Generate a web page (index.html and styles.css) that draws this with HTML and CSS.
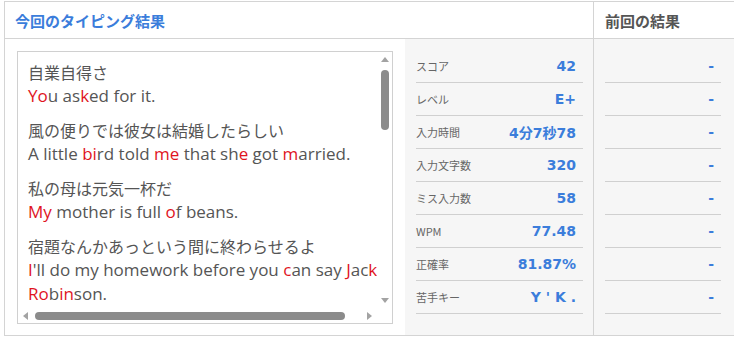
FILE: index.html
```html
<!DOCTYPE html>
<html lang="ja">
<head>
  <meta charset="UTF-8">
  <meta name="viewport" content="width=device-width, initial-scale=1.0">
  <link rel="stylesheet" href="styles.css">
</head>
<body>
  <div class="result">
    <div class="result-head">
      <div class="head-now">今回のタイピング結果</div>
      <div class="head-prev">前回の結果</div>
    </div>
    <div class="result-body">
      <div class="now">
        <div class="typed">
          <div class="typed-box">
            <div class="typed-view">
              <div class="typed-text">
                <div class="pair">
                  <p class="ja">自業自得さ</p>
                  <p class="en"><span class="miss">Yo</span>u as<span class="miss">k</span>ed for it.</p>
                </div>
                <div class="pair">
                  <p class="ja">風の便りでは彼女は結婚したらしい</p>
                  <p class="en">A little <span class="miss">bi</span>rd told <span class="miss">me</span> that sh<span class="miss">e</span> got <span class="miss">m</span>arried.</p>
                </div>
                <div class="pair">
                  <p class="ja">私の母は元気一杯だ</p>
                  <p class="en"><span class="miss">My</span> mother is full <span class="miss">o</span>f beans.</p>
                </div>
                <div class="pair">
                  <p class="ja">宿題なんかあっという間に終わらせるよ</p>
                  <p class="en"><span class="miss">I</span>'ll do my homework before you <span class="miss">c</span>an say <span class="miss">J</span>ac<span class="miss">k</span> <span class="miss">Ro</span>b<span class="miss">in</span>son.</p>
                </div>
              </div>
            </div>
            <div class="vbar">
              <div class="arrow"><span class="tri up"></span></div>
              <div class="vtrack"><div class="thumb vthumb"></div></div>
              <div class="arrow"><span class="tri down"></span></div>
            </div>
            <div class="hbar">
              <div class="arrow"><span class="tri left"></span></div>
              <div class="htrack"><div class="thumb hthumb"></div></div>
              <div class="arrow"><span class="tri right"></span></div>
            </div>
            <div class="corner"></div>
          </div>
        </div>
        <ul class="stats">
          <li><span class="label">スコア</span><span class="value">42</span></li>
          <li><span class="label">レベル</span><span class="value">E+</span></li>
          <li><span class="label">入力時間</span><span class="value">4分7秒78</span></li>
          <li><span class="label">入力文字数</span><span class="value">320</span></li>
          <li><span class="label">ミス入力数</span><span class="value">58</span></li>
          <li><span class="label">WPM</span><span class="value">77.48</span></li>
          <li><span class="label">正確率</span><span class="value">81.87%</span></li>
          <li><span class="label">苦手キー</span><span class="value keys">Y ' K .</span></li>
        </ul>
      </div>
      <ul class="stats prev">
        <li><span class="value">-</span></li>
        <li><span class="value">-</span></li>
        <li><span class="value">-</span></li>
        <li><span class="value">-</span></li>
        <li><span class="value">-</span></li>
        <li><span class="value">-</span></li>
        <li><span class="value">-</span></li>
        <li><span class="value">-</span></li>
      </ul>
    </div>
  </div>
</body>
</html>
```

FILE: styles.css
```css
body {
  margin: 0;
  background-color: #ffffff;
  font-family: "Noto Sans CJK JP", sans-serif;
  color: #555555;
  overflow: hidden;
}
.result {
  margin: 1px 0 0 4px;
  width: 730px;
  border: 1px solid #d4d4d4;
  border-right: none;
}
.result-head,
.result-body {
  display: grid;
  grid-template-columns: 589px 1fr;
}
.result-head {
  height: 36px;
  border-bottom: 1px solid #d4d4d4;
}
.head-now,
.head-prev {
  display: flex;
  align-items: center;
  font-size: 15px;
  font-weight: bold;
}
.head-now {
  padding-left: 10px;
  color: #3b7ddb;
  border-right: 1px solid #d4d4d4;
}
.head-prev {
  padding-left: 11px;
  color: #555555;
}
.now {
  display: flex;
  border-right: 1px solid #d4d4d4;
}
.typed {
  width: 400px;
  padding: 12px 12px 11px;
  box-sizing: border-box;
}

/* text box with its scrollbars */
.typed-box {
  display: grid;
  grid-template-columns: 1fr 15px;
  grid-template-rows: 1fr 15px;
  height: 273px;
  box-sizing: border-box;
  border: 1px solid #d0d0d0;
  background-color: #ffffff;
}
.typed-view {
  overflow: hidden;
}
.typed-text {
  width: 362px;
  padding: 8px 10px 10px;
  font-size: 16px;
  line-height: 24px;
}
.pair {
  margin-bottom: 10px;
}
.pair p {
  margin: 0;
}
.en {
  font-family: "Open Sans", "Noto Sans CJK JP", sans-serif;
  font-size: 17px;
}
.miss {
  color: #e0141e;
}
.vbar {
  display: flex;
  flex-direction: column;
}
.hbar {
  display: flex;
}
.arrow {
  display: flex;
  align-items: center;
  justify-content: center;
  width: 15px;
  height: 15px;
  flex-shrink: 0;
}
.tri {
  width: 0;
  height: 0;
}
.tri.up {
  border-left: 4px solid transparent;
  border-right: 4px solid transparent;
  border-bottom: 5px solid #a3a3a3;
  margin-left: 1px;
}
.tri.down {
  border-left: 4px solid transparent;
  border-right: 4px solid transparent;
  border-top: 5px solid #a3a3a3;
  margin-left: 1px;
}
.tri.left {
  border-top: 4px solid transparent;
  border-bottom: 4px solid transparent;
  border-right: 5px solid #a3a3a3;
  margin-top: 1px;
}
.tri.right {
  border-top: 4px solid transparent;
  border-bottom: 4px solid transparent;
  border-left: 5px solid #a3a3a3;
  margin-top: 1px;
}
.vtrack {
  flex: 1;
  padding-left: 4px;
}
.htrack {
  flex: 1;
  padding-top: 4px;
}
.thumb {
  background-color: #8b8b8b;
  border-radius: 4px;
}
.vthumb {
  width: 8px;
  height: 60px;
  margin-top: 3px;
}
.hthumb {
  width: 310px;
  height: 8px;
  margin-left: 2px;
}

/* result rows */
.stats {
  flex: 1;
  margin: 0;
  padding: 11px 10px 0 11px;
  list-style: none;
  background-color: #f6f6f6;
}
.stats li {
  display: flex;
  align-items: center;
  justify-content: space-between;
  height: 32px;
  padding-right: 7px;
  border-bottom: 1px solid #d0d0d0;
}
.label {
  font-size: 11px;
  color: #666666;
}
.value {
  font-family: "DejaVu Sans", "Noto Sans CJK JP", sans-serif;
  font-size: 14px;
  font-weight: bold;
  color: #3b7ddb;
}
.prev {
  padding: 11px 14px 0 11px;
}
.prev li {
  justify-content: flex-end;
}
```
